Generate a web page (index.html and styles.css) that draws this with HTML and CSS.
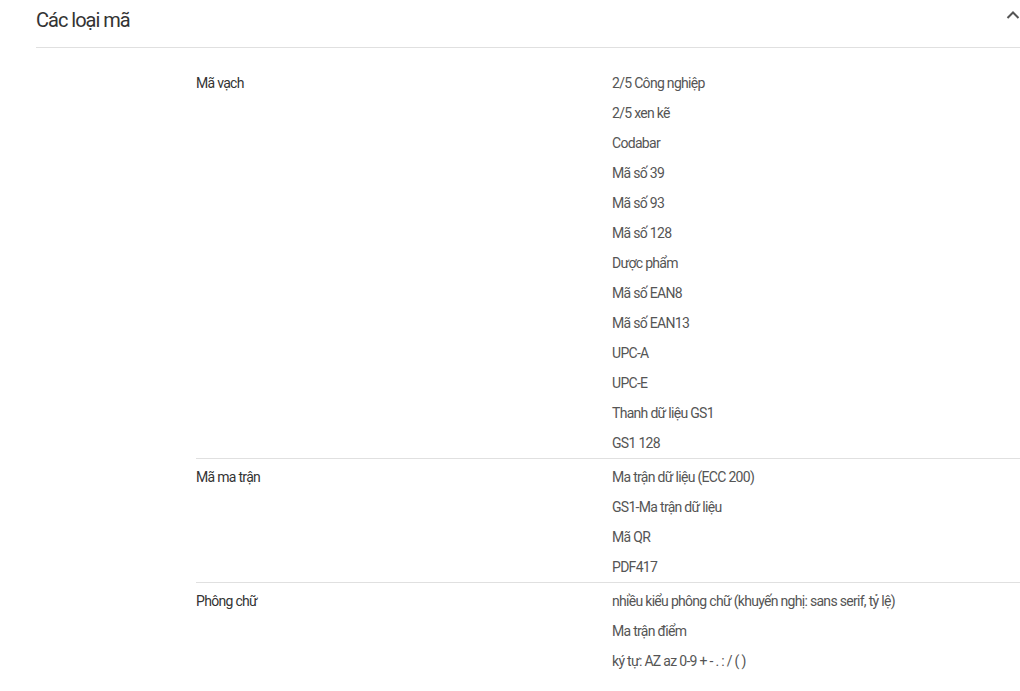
FILE: index.html
```html
<!DOCTYPE html>
<html lang="vi">
<head>
<meta charset="utf-8">
<link rel="stylesheet" href="styles.css">
</head>
<body>
<section class="panel">
  <header class="panel-head">
    <h2 class="panel-title">Các loại mã</h2>
    <svg class="chevron" width="14" height="10" viewBox="0 0 14 10"><path d="M1.5 8 L7 2.5 L12.5 8" fill="none" stroke="#555" stroke-width="2"/></svg>
  </header>
  <div class="spec">
    <div class="spec-row">
      <div class="spec-label">Mã vạch</div>
      <ul class="spec-values">
        <li>2/5 Công nghiệp</li>
        <li>2/5 xen kẽ</li>
        <li>Codabar</li>
        <li>Mã số 39</li>
        <li>Mã số 93</li>
        <li>Mã số 128</li>
        <li>Dược phẩm</li>
        <li>Mã số EAN8</li>
        <li>Mã số EAN13</li>
        <li>UPC-A</li>
        <li>UPC-E</li>
        <li>Thanh dữ liệu GS1</li>
        <li>GS1 128</li>
      </ul>
    </div>
    <div class="spec-row">
      <div class="spec-label">Mã ma trận</div>
      <ul class="spec-values">
        <li>Ma trận dữ liệu (ECC 200)</li>
        <li>GS1-Ma trận dữ liệu</li>
        <li>Mã QR</li>
        <li>PDF417</li>
      </ul>
    </div>
    <div class="spec-row last">
      <div class="spec-label">Phông chữ</div>
      <ul class="spec-values">
        <li>nhiều kiểu phông chữ (khuyến nghị: sans serif, tỷ lệ)</li>
        <li>Ma trận điểm</li>
        <li>ký tự: AZ az 0-9 + - . : / ( )</li>
      </ul>
    </div>
  </div>
</section>
</body>
</html>
```
FILE: styles.css
```css
html, body {
  margin: 0;
  padding: 0;
  background: #fff;
}
body {
  font-family: Roboto, "Liberation Sans", sans-serif;
  color: #333;
  overflow: hidden;
}
.panel {
  margin-left: 36px;
}
.panel-head {
  height: 48px;
  box-sizing: border-box;
  border-bottom: 1px solid #e0e0e0;
  display: flex;
  align-items: flex-start;
  justify-content: space-between;
}
.panel-title {
  margin: 8px 0 0;
  font-size: 20px;
  font-weight: 400;
  line-height: 24px;
  color: #333;
  letter-spacing: -1px;
}
.chevron {
  margin-top: 10px;
  margin-right: 0;
}
.spec {
  margin-left: 160px;
  padding-top: 20px;
}
.spec-row {
  display: grid;
  grid-template-columns: 416px 1fr;
  padding-top: 3px;
  border-bottom: 1px solid #e0e0e0;
  font-size: 14px;
  line-height: 30px;
  letter-spacing: -0.7px;
}
.spec-row:first-child {
  padding-top: 0;
}
.spec-row.last {
  border-bottom: none;
}
.spec-label {
  color: #333;
}
.spec-values {
  list-style: none;
  margin: 0;
  padding: 0;
  color: #555;
}
```
